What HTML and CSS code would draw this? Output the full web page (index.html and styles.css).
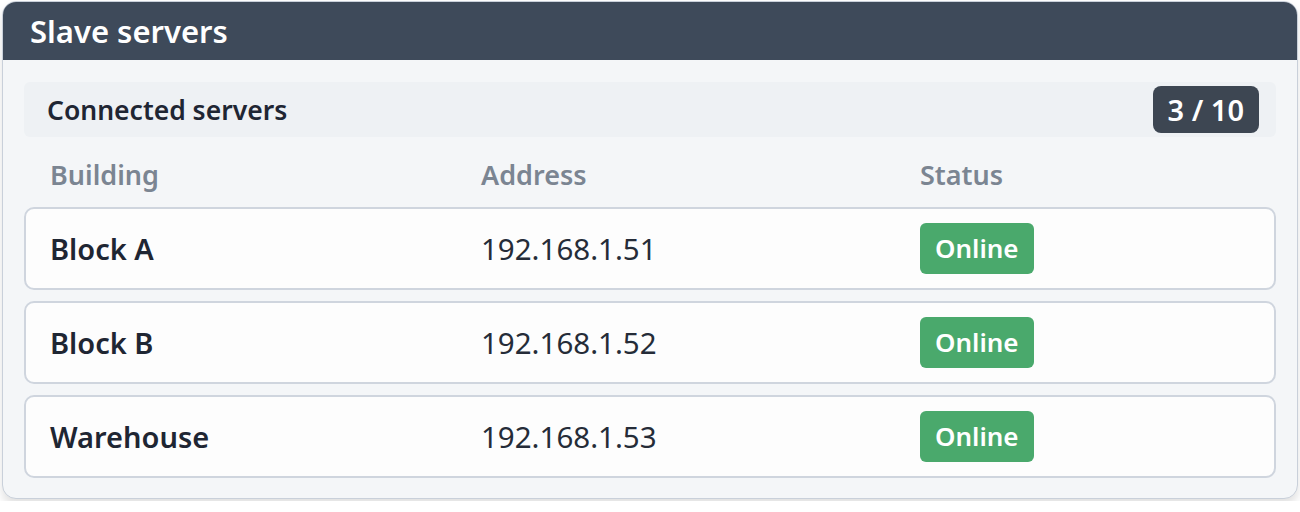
FILE: index.html
```html
<!DOCTYPE html>
<html lang="en">
<head>
    <meta charset="UTF-8">
    <title>Slave servers</title>
    <link rel="stylesheet" href="styles.css">
</head>
<body>
    <div class="kart">
        <div class="kartBaslik">Slave servers</div>
        <div class="kartIcerik">
            <div class="altBaslik">
                <span>Connected servers</span>
                <span class="sayac">3 / 10</span>
            </div>
            <div class="sutunlar">
                <span>Building</span>
                <span>Address</span>
                <span>Status</span>
            </div>
            <div class="satir">
                <span class="bina">Block A</span>
                <span class="adres">192.168.1.51</span>
                <span><span class="durum">Online</span></span>
            </div>
            <div class="satir">
                <span class="bina">Block B</span>
                <span class="adres">192.168.1.52</span>
                <span><span class="durum">Online</span></span>
            </div>
            <div class="satir">
                <span class="bina">Warehouse</span>
                <span class="adres">192.168.1.53</span>
                <span><span class="durum">Online</span></span>
            </div>
        </div>
    </div>
</body>
</html>
```

FILE: styles.css
```css
body {
    margin: 0;
    padding: 1px 2px 2px 2px;
    background-color: #ffffff;
    font-family: "Noto Sans", "Open Sans", sans-serif;
    color: #1f2633;
}

.kart {
    border: 1px solid #c9d0da;
    border-radius: 14px;
    background-color: #f4f6f8;
    overflow: hidden;
    box-shadow: 0 6px 10px rgba(0, 0, 0, 0.12);
}

.kartBaslik {
    background-color: #3e4a5a;
    color: #ffffff;
    font-size: 31px;
    font-weight: 600;
    height: 58px;
    line-height: 58px;
    padding-left: 27px;
}

.kartIcerik {
    padding: 22px 21px 20px 21px;
}

.altBaslik {
    background-color: #eef1f4;
    border-radius: 6px;
    height: 55px;
    display: flex;
    align-items: center;
    justify-content: space-between;
    padding: 0 17px 0 23px;
    font-size: 26.5px;
    font-weight: 600;
}

.sayac {
    background-color: #3d4652;
    color: #ffffff;
    border-radius: 8px;
    height: 47px;
    line-height: 47px;
    padding: 0 15px;
    font-size: 29px;
}

.sutunlar, .satir {
    display: grid;
    grid-template-columns: 431px 439px 1fr;
    align-items: center;
}

.sutunlar {
    height: 70px;
    padding-left: 26px;
    padding-top: 4px;
    box-sizing: border-box;
    color: #7b8592;
    font-weight: 600;
    font-size: 27px;
}

.satir {
    height: 79px;
    padding-left: 24px;
    margin-bottom: 11px;
    border: 2px solid #cfd5de;
    border-radius: 10px;
    background-color: #fdfdfd;
}

.satir:last-child {
    margin-bottom: 0;
}

.bina {
    font-weight: 600;
    font-size: 29px;
}

.adres {
    font-size: 29.5px;
    color: #252c38;
}

.durum {
    display: inline-block;
    background-color: #4aa96c;
    color: #ffffff;
    font-weight: 600;
    font-size: 26px;
    border-radius: 6px;
    height: 51px;
    line-height: 51px;
    padding: 0 15px;
}
```
